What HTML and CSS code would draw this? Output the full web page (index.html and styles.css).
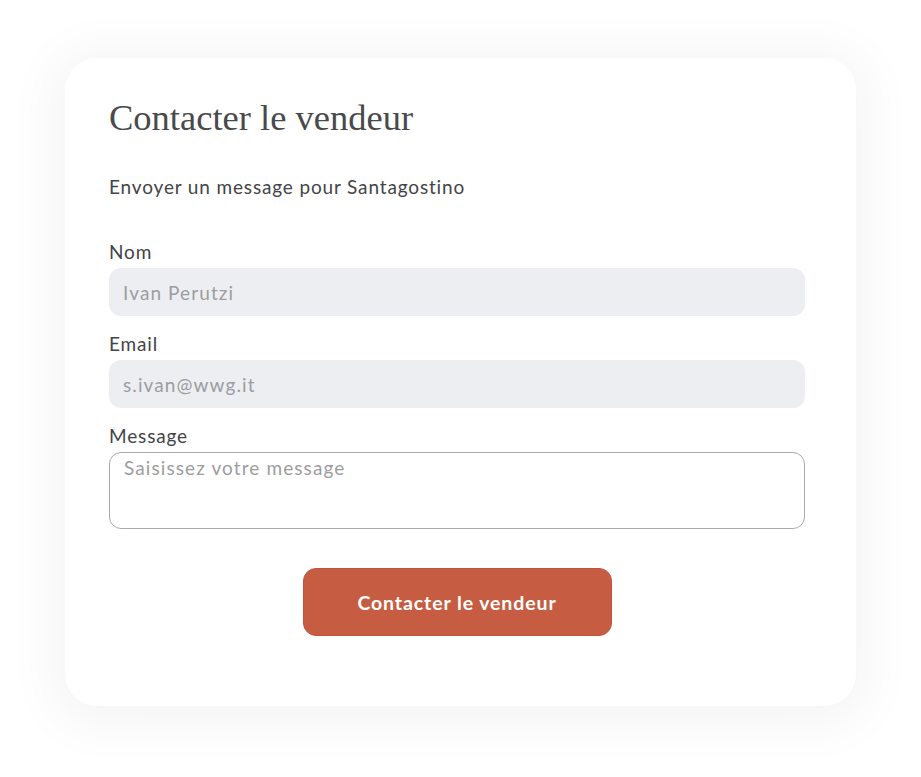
FILE: index.html
```html
<!DOCTYPE html>
<html lang="fr">
<head>
<meta charset="utf-8">
<title>Contacter le vendeur</title>
<link rel="stylesheet" href="styles.css">
</head>
<body>
<main class="card">
  <h1 class="title">Contacter le vendeur</h1>
  <p class="subtitle">Envoyer un message pour Santagostino</p>
  <form class="form">
    <label class="field">
      <span class="label">Nom</span>
      <input class="input" type="text" placeholder="Ivan Perutzi">
    </label>
    <label class="field">
      <span class="label">Email</span>
      <input class="input" type="email" placeholder="s.ivan@wwg.it">
    </label>
    <label class="field">
      <span class="label">Message</span>
      <textarea class="textarea" placeholder="Saisissez votre message"></textarea>
    </label>
    <div class="actions">
      <button class="button" type="button">Contacter le vendeur</button>
    </div>
  </form>
</main>
</body>
</html>
```
FILE: styles.css
```css
* { box-sizing: border-box; }
html, body { margin: 0; }
body {
  background: #ffffff;
  padding: 58px 65px 71px;
  font-family: "Lato", "Open Sans", sans-serif;
  letter-spacing: 0.85px;
  color: #444447;
}
.card {
  background: #ffffff;
  border-radius: 32px;
  box-shadow: 0 6px 50px 14px rgba(0, 0, 0, 0.045);
  padding: 40px 51px 70px 44px;
}
.title {
  margin: 0;
  font-family: "Liberation Serif", "DejaVu Serif", serif;
  font-weight: 400;
  font-size: 36.5px;
  line-height: 40px;
  letter-spacing: 0;
  color: #49494c;
}
.subtitle {
  margin: 37px 0 0;
  font-size: 19px;
  line-height: 24px;
}
.form {
  display: flex;
  flex-direction: column;
  margin-top: 41px;
}
.field {
  display: flex;
  flex-direction: column;
  gap: 4px;
  margin-bottom: 16px;
}
.field:last-of-type { margin-bottom: 0; }
.label {
  font-size: 19px;
  line-height: 24px;
}
.input, .textarea {
  font-family: inherit;
  font-size: 19px;
  letter-spacing: 1.1px;
  color: #444447;
  width: 100%;
  outline: none;
}
.input {
  height: 48px;
  border: none;
  border-radius: 12px;
  background: #edeef2;
  padding: 0 14px;
}
.textarea {
  height: 77px;
  border: 1.5px solid #a9a9ab;
  border-radius: 12px;
  background: #ffffff;
  padding: 3px 14px;
  resize: none;
}
.input::placeholder, .textarea::placeholder { color: #9d9d9f; opacity: 1; }
.actions {
  display: flex;
  justify-content: center;
  margin-top: 39px;
}
.button {
  width: 309px;
  height: 68px;
  border: 1px solid #c0533a;
  border-radius: 13px;
  background: #c65d42;
  color: #ffffff;
  font-family: inherit;
  font-weight: 700;
  font-size: 19.5px;
  letter-spacing: 0.9px;
  cursor: pointer;
}
```
